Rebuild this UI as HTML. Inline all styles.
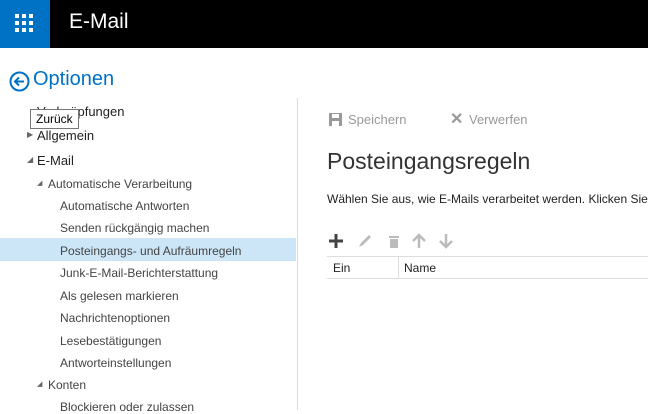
<html><head><style>
body{margin:0;width:648px;height:410px;overflow:hidden;background:#fff;font-family:"Liberation Sans",sans-serif;position:relative}
.t{position:absolute;white-space:nowrap}
.nav{font-size:12px;color:#444}
</style></head><body>
<div style="position:absolute;left:0;top:0;width:648px;height:48px;background:#000"></div>
<div style="position:absolute;left:0;top:0;width:50px;height:48px;background:#0072c6"></div>
<svg style="position:absolute;left:15px;top:14px" width="20" height="20"><g fill="#fff">
<rect x="0" y="0" width="4" height="4"/><rect x="7" y="0" width="4" height="4"/><rect x="14" y="0" width="4" height="4"/>
<rect x="0" y="7" width="4" height="4"/><rect x="7" y="7" width="4" height="4"/><rect x="14" y="7" width="4" height="4"/>
<rect x="0" y="14" width="4" height="4"/><rect x="7" y="14" width="4" height="4"/><rect x="14" y="14" width="4" height="4"/></g></svg>
<div class="t" style="left:69px;top:10px;color:#fff;font-size:21px">E-Mail</div>
<svg style="position:absolute;left:9px;top:71px" width="21" height="21"><circle cx="10.5" cy="10.5" r="9" fill="none" stroke="#0072c6" stroke-width="2"/><path d="M15 10.5H6.5M10 6.5L6 10.5L10 14.5" fill="none" stroke="#0072c6" stroke-width="2"/></svg>
<div class="t" style="left:33px;top:68px;color:#0072c6;font-size:20px">Optionen</div>
<div style="position:absolute;left:297px;top:98px;width:1px;height:312px;background:#ddd"></div>
<div class="t" style="left:37px;top:104px;font-size:13px;color:#222">Verknüpfungen</div>
<div class="t" style="left:30px;top:109px;font-size:12px;color:#000;background:#fff;border:1px solid #777;padding:2px 5px;line-height:14px">Zurück</div>
<div class="t" style="left:27px;top:130px;font-size:8px;color:#666">▶</div>
<div class="t" style="left:37px;top:128px;font-size:13px;color:#222">Allgemein</div>
<div class="t" style="left:27px;top:155px;font-size:8px;color:#666">◢</div>
<div class="t" style="left:37px;top:153px;font-size:13px;color:#222">E-Mail</div>
<div class="t" style="left:37px;top:179px;font-size:7px;color:#666">◢</div>
<div class="t nav" style="left:48px;top:177px">Automatische Verarbeitung</div>
<div style="position:absolute;left:0;top:238px;width:296px;height:23px;background:#cde6f7"></div>
<div class="t nav" style="left:60px;top:199px">Automatische Antworten</div>
<div class="t nav" style="left:60px;top:221px">Senden rückgängig machen</div>
<div class="t nav" style="left:60px;top:244px">Posteingangs- und Aufräumregeln</div>
<div class="t nav" style="left:60px;top:266px">Junk-E-Mail-Berichterstattung</div>
<div class="t nav" style="left:60px;top:289px">Als gelesen markieren</div>
<div class="t nav" style="left:60px;top:311px">Nachrichtenoptionen</div>
<div class="t nav" style="left:60px;top:334px">Lesebestätigungen</div>
<div class="t nav" style="left:60px;top:356px">Antworteinstellungen</div>
<div class="t" style="left:37px;top:380px;font-size:7px;color:#666">◢</div>
<div class="t nav" style="left:48px;top:378px">Konten</div>
<div class="t nav" style="left:60px;top:400px">Blockieren oder zulassen</div>
<svg style="position:absolute;left:329px;top:113px" width="13" height="13"><rect width="13" height="13" fill="#999"/><rect x="3" y="1" width="7" height="4" fill="#fff"/><rect x="3" y="8" width="7" height="5" fill="#fff"/></svg>
<div class="t" style="left:348px;top:112px;font-size:13px;color:#999">Speichern</div>
<div class="t" style="left:450px;top:109px;font-size:16px;color:#999;font-weight:bold">✕</div>
<div class="t" style="left:469px;top:112px;font-size:13px;color:#999">Verwerfen</div>
<div class="t" style="left:327px;top:148px;font-size:23px;color:#333">Posteingangsregeln</div>
<div class="t" style="left:327px;top:192px;font-size:12px;color:#222">Wählen Sie aus, wie E-Mails verarbeitet werden. Klicken Sie au</div>
<svg style="position:absolute;left:329px;top:233px" width="130" height="16">
<path d="M7 1V15M0 8H14" stroke="#444" stroke-width="3"/>
<path d="M30 14L32 10L40 2L42 4L34 12Z" fill="#bbb"/>
<rect x="60" y="3" width="10" height="2" fill="#bbb"/><rect x="61" y="6" width="8" height="9" fill="#bbb"/>
<path d="M90 15V2M84 8L90 2L96 8" stroke="#bbb" stroke-width="2.5" fill="none"/>
<path d="M117 1V14M111 8L117 14L123 8" stroke="#bbb" stroke-width="2.5" fill="none"/>
</svg>
<div style="position:absolute;left:327px;top:256px;width:321px;height:21px;border-top:1px solid #ddd;border-bottom:1px solid #ddd"></div>
<div style="position:absolute;left:398px;top:257px;width:1px;height:21px;background:#ddd"></div>
<div class="t" style="left:333px;top:261px;font-size:12px;color:#222">Ein</div>
<div class="t" style="left:404px;top:261px;font-size:12px;color:#222">Name</div>
</body></html>
